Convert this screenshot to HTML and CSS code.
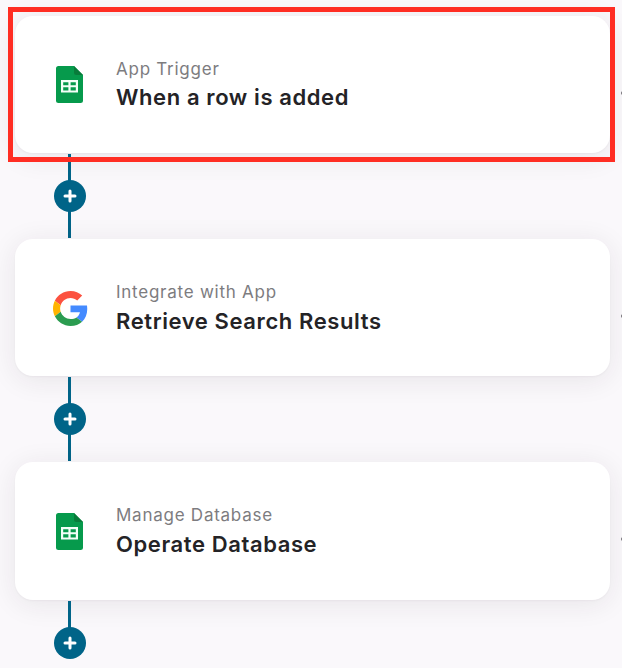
FILE: index.html
```
<!DOCTYPE html>
<html lang="en">
<head>
  <meta charset="UTF-8" />
  <title>Workflow</title>
  <link rel="stylesheet" href="styles.css">
</head>
<body>
  <svg class="defs" width="0" height="0">
    <symbol id="sheets" viewBox="0 0 27 37">
      <path d="M2.500 0H18l9 9v25.500a2.500 2.500 0 0 1-2.500 2.500h-22A2.500 2.500 0 0 1 0 34.500V2.500A2.500 2.500 0 0 1 2.500 0z" fill="#069a4c"/>
      <path d="M18 0l9 9h-6.500A2.500 2.500 0 0 1 18 6.500z" fill="#087b3a"/>
      <path d="M5 14h17v12.500H5z" fill="#f3fff8"/>
      <path d="M7.200 16.200h5.200v3.100H7.200zM14.600 16.200h5.200v3.100h-5.200zM7.200 21.300h5.200v3.100H7.200zM14.600 21.300h5.200v3.100h-5.200z" fill="#069a4c"/>
    </symbol>
    <symbol id="plus" viewBox="0 0 14 14">
      <path d="M7 2v10M2 7h10" stroke="#fff" stroke-width="3" stroke-linecap="round"/>
    </symbol>
  </svg>

  <div class="flow">
    <div class="card">
      <div class="highlight"></div>
      <svg class="icon sheet"><use href="#sheets"/></svg>
      <div class="text">
        <div class="label">App Trigger</div>
        <div class="title">When a row is added</div>
      </div>
      <span class="more"></span>
    </div>
    <div class="connector"><button class="add"><svg width="14" height="14"><use href="#plus"/></svg></button></div>

    <div class="card">
      <svg class="icon google" viewBox="0 0 48 48">
        <path fill="#fc5240" d="M24 9.500c3.540 0 6.710 1.220 9.210 3.600l6.850-6.850C35.900 2.380 30.470 0 24 0 14.620 0 6.510 5.380 2.560 13.220l7.980 6.190C12.430 13.720 17.740 9.500 24 9.500z"/>
        <path fill="#448aff" d="M46.980 24.550c0-1.570-.15-3.090-.38-4.550H24v9.020h12.940c-.58 2.960-2.260 5.480-4.780 7.180l7.730 6c4.510-4.180 7.090-10.360 7.090-17.650z"/>
        <path fill="#ffb300" d="M10.530 28.590c-.48-1.450-.76-2.990-.76-4.590s.27-3.140.76-4.590l-7.980-6.190C.92 16.460 0 20.120 0 24c0 3.880.92 7.540 2.560 10.780l7.970-6.190z"/>
        <path fill="#2b9c50" d="M24 48c6.480 0 11.930-2.130 15.890-5.810l-7.730-6c-2.150 1.450-4.920 2.300-8.160 2.300-6.260 0-11.570-4.220-13.470-9.910l-7.980 6.190C6.510 42.620 14.620 48 24 48z"/>
      </svg>
      <div class="text lower">
        <div class="label">Integrate with App</div>
        <div class="title">Retrieve Search Results</div>
      </div>
      <span class="more"></span>
    </div>
    <div class="connector"><button class="add"><svg width="14" height="14"><use href="#plus"/></svg></button></div>

    <div class="card last">
      <svg class="icon sheet"><use href="#sheets"/></svg>
      <div class="text lower">
        <div class="label">Manage Database</div>
        <div class="title">Operate Database</div>
      </div>
      <span class="more"></span>
    </div>
    <div class="connector end"><button class="add"><svg width="14" height="14"><use href="#plus"/></svg></button></div>
  </div>
</body>
</html>
```
FILE: styles.css
```
* { box-sizing: border-box; }
body { margin: 0; height: 668px; overflow: hidden; background-color: #faf8fb; font-family: Inter, sans-serif; }
.defs { display: block; }
.flow { padding: 16px 0 0 15px; }
.card { position: relative; display: flex; align-items: center; width: 594.5px; height: 137px; padding-left: 36px; background-color: #fff; border-radius: 18px; box-shadow: 0 4px 28px rgba(40, 35, 40, 0.09), 0 1px 2px rgba(40, 35, 40, 0.04); }
.card.last { height: 138px; }
.highlight { position: absolute; z-index: 2; top: -9px; left: -7px; width: 607px; height: 155px; border: 5px solid #ff2d23; }
.icon { flex: none; }
.sheet { width: 27px; height: 37px; margin: 0 5px; }
.google { width: 35px; height: 35px; margin: 1px 0 0 2px; }
.text { margin-left: 28px; white-space: nowrap; }
.label { font-size: 17px; line-height: 24px; letter-spacing: 0.75px; color: #7d7c7f; }
.title { font-size: 22px; line-height: 32px; font-weight: 600; letter-spacing: 0.6px; color: #242326; }
.lower .title { padding-top: 1px; margin-bottom: -1px; }
.more { position: absolute; top: 75px; left: 606px; width: 4px; height: 4px; border-radius: 50%; background-color: #77757a; }
.connector { position: relative; display: flex; justify-content: center; width: 32px; height: 86px; margin-left: 39px; padding-top: 27px; background: linear-gradient(#006488, #006488) 14px 1px / 3px 84px no-repeat; }
.connector.end { background-size: 3px 40px; }
.add { display: flex; align-items: center; justify-content: center; width: 32px; height: 32px; padding: 0; border: none; border-radius: 50%; background-color: #006488; }
```
